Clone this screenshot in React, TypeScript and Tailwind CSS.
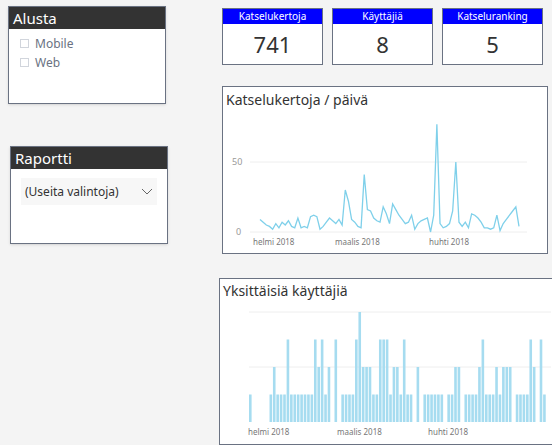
import React from 'react'

const lineVals = [9,7,5,4,2,6,3,7,5,8,4,3,10,3,4,3,11,12,11,2,4,7,10,8,6,9,5,30,22,9,7,4,3,41,16,15,10,8,7,18,13,6,20,16,12,9,6,7,12,2,6,8,9,10,0,12,77,6,3,4,6,15,50,7,4,7,3,13,12,10,7,3,3,2,3,12,1,6,9,12,15,18,4]
const barVals = [1,0,0,0,0,0,1,2,1,1,1,3,1,1,1,1,1,1,1,3,2,3,1,2,0,3,0,1,1,1,1,3,4,2,2,2,1,1,3,3,3,1,2,2,1,3,1,1,0,2,0,1,1,1,1,1,1,0,1,1,2,2,0,1,1,1,1,2,3,1,1,1,2,1,2,2,2,0,1,1,1,1,3,2,0,3,1]

function Slicer({ title, children }: { title: string; children: React.ReactNode }) {
  return (
    <div className="w-[158px] h-[98px] border border-gray-500 bg-white shadow-sm">
      <div className="bg-[#333333] text-white text-[15px] leading-[22px] px-1 h-[22px]">{title}</div>
      {children}
    </div>
  )
}

function Kpi({ title, value }: { title: string; value: string }) {
  return (
    <div className="w-[101px] h-[57px] border border-gray-500 bg-white">
      <div className="bg-[#0000ff] text-white text-[10px] h-[15px] leading-[15px] text-center">{title}</div>
      <div className="text-[22px] text-[#333] text-center leading-[40px] font-['DejaVu_Sans_Condensed',sans-serif]">{value}</div>
    </div>
  )
}

export default function App() {
  const pts = lineVals.map((v, i) => `${36 + (i * 259) / (lineVals.length - 1)},${144 - v * 1.4}`).join(' ')
  return (
    <div className="w-[552px] h-[445px] bg-[#f4f4f4] overflow-hidden font-['Open_Sans',sans-serif] flex">
      <div className="flex flex-col pl-[8px] pt-[6px] gap-[42px] w-[222px] shrink-0">
        <Slicer title="Alusta">
          <div className="pl-[11px] pt-[5px] text-[12px] text-gray-500 leading-[19px]">
            <div className="flex items-center gap-[6px]"><span className="w-[9px] h-[9px] border border-gray-300" />Mobile</div>
            <div className="flex items-center gap-[6px]"><span className="w-[9px] h-[9px] border border-gray-300" />Web</div>
          </div>
        </Slicer>
        <div className="ml-[2px]">
          <Slicer title="Raportti">
            <div className="mx-[10px] mt-[9px] h-[27px] bg-[#f7f7f7] flex items-center justify-between px-1 text-[12px] text-[#333]">
              (Useita valintoja)
              <svg width="12" height="8" viewBox="0 0 12 8"><path d="M1 1l5 5 5-5" fill="none" stroke="#666" /></svg>
            </div>
          </Slicer>
        </div>
      </div>
      <div className="flex flex-col pt-[8px] shrink-0">
        <div className="flex gap-[9px]">
          <Kpi title="Katselukertoja" value="741" />
          <Kpi title="Käyttäjiä" value="8" />
          <Kpi title="Katseluranking" value="5" />
        </div>
        <div className="mt-[21px] w-[326px] h-[172px] border border-gray-500 bg-white relative">
          <div className="text-[14px] text-[#333] pl-[3px] pt-[2px]">Katselukertoja / päivä</div>
          <svg className="absolute left-0 top-0" width="326" height="172" viewBox="-1 -1 326 172">
            <line x1="26" x2="303" y1="74" y2="74" stroke="#eee" />
            <line x1="26" x2="303" y1="144" y2="144" stroke="#eee" />
            <text x="8" y="77" fontSize="9" fill="#999">50</text>
            <text x="12" y="147" fontSize="9" fill="#999">0</text>
            <polyline points={pts} fill="none" stroke="#7fd0ea" strokeWidth="1.3" />
            <text x="29" y="157" fontSize="8" fill="#777">helmi 2018</text>
            <text x="111" y="157" fontSize="8" fill="#777">maalis 2018</text>
            <text x="205" y="157" fontSize="8" fill="#777">huhti 2018</text>
          </svg>
        </div>
        <div className="mt-[24px] ml-[-3px] w-[340px] h-[170px] border border-gray-500 bg-white relative">
          <div className="text-[14px] text-[#333] pl-[3px] pt-[1px]">Yksittäisiä käyttäjiä</div>
          <svg className="absolute left-0 top-0" width="340" height="170" viewBox="-1 -1 340 170">
            <line x1="28" x2="330" y1="32" y2="32" stroke="#eee" />
            <line x1="28" x2="330" y1="87" y2="87" stroke="#eee" />
            {barVals.map((v, i) => v ? (
              <rect key={i} x={28 + i * 3.42} y={142 - v * 27.5} width="2.6" height={v * 27.5} fill="#a6dcf0" />
            ) : null)}
            <text x="27" y="155" fontSize="8" fill="#777">helmi 2018</text>
            <text x="116" y="155" fontSize="8" fill="#777">maalis 2018</text>
            <text x="207" y="155" fontSize="8" fill="#777">huhti 2018</text>
          </svg>
        </div>
      </div>
    </div>
  )
}
